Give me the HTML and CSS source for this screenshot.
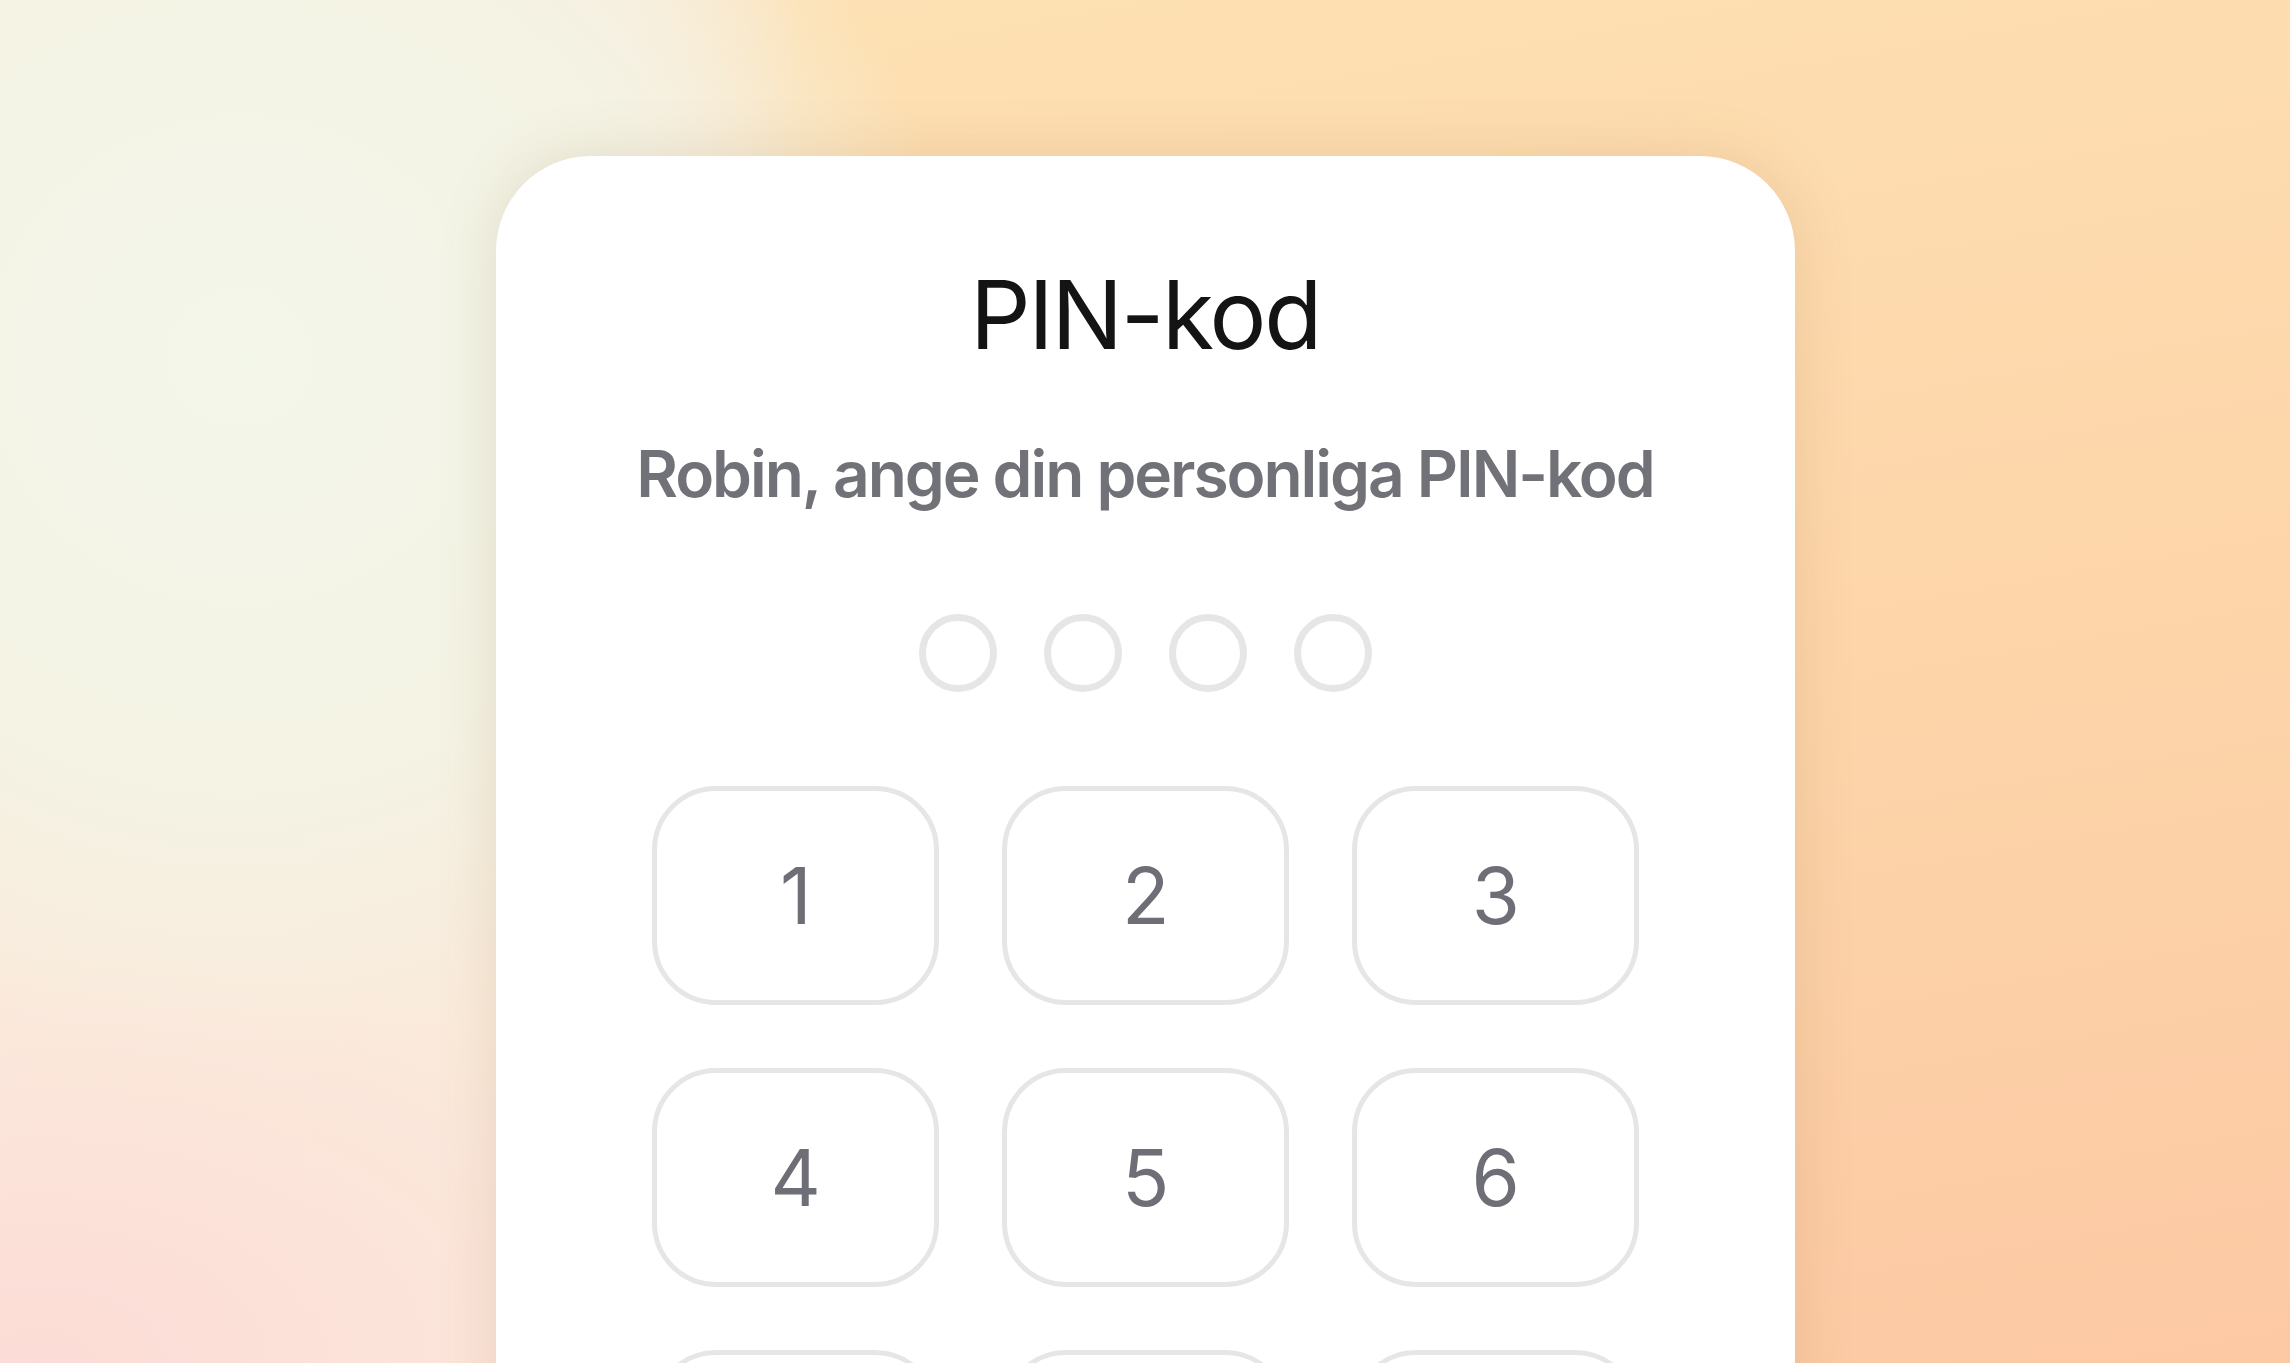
FILE: index.html
```html
<!DOCTYPE html>
<html lang="sv">
<head>
    <meta charset="UTF-8">
    <meta name="viewport" content="width=device-width, initial-scale=1.0">
    <title>PIN-kod</title>
    <link rel="stylesheet" href="styles.css">
</head>
<body>

    <main class="card">
        <h1>PIN-kod</h1>
        <p class="subtitle">Robin, ange din personliga PIN-kod</p>

        <!-- PIN dots -->
        <div class="dots">
            <span class="dot"></span>
            <span class="dot"></span>
            <span class="dot"></span>
            <span class="dot"></span>
        </div>

        <!-- Keypad -->
        <div class="keypad">
            <button class="key">1</button>
            <button class="key">2</button>
            <button class="key">3</button>
            <button class="key">4</button>
            <button class="key">5</button>
            <button class="key">6</button>
            <button class="key"></button>
            <button class="key"></button>
            <button class="key"></button>
        </div>
    </main>

</body>
</html>
```

FILE: styles.css
```css
html, body {
    margin: 0;
    height: 100%;
    overflow: hidden;
}

body {
    font-family: 'Inter', 'Noto Sans', sans-serif;
    background:
        radial-gradient(ellipse 720px 700px at 240px 360px, #f3f6ea 0%, #f4f3e4 60%, rgba(245, 240, 225, 0) 100%),
        radial-gradient(ellipse 700px 420px at 40px 1363px, #fcdcd6 0%, rgba(252, 224, 216, 0.8) 45%, rgba(252, 228, 216, 0) 100%),
        linear-gradient(to right, #faebdc 0%, #fbeadb 27%, rgba(250, 234, 219, 0) 35%),
        linear-gradient(170deg, #fde3b5 0%, #fdd5a9 55%, #fcc9a4 100%);
}

.card {
    width: 1299px;
    box-sizing: border-box;
    margin: 156px auto 0;
    padding: 111px 60px 200px;
    background-color: #ffffff;
    border-radius: 95px 95px 0 0;
    box-shadow: 0 0 60px rgba(140, 100, 50, 0.16);
    text-align: center;
}

h1 {
    margin: 0;
    font-size: 95px;
    line-height: 1;
    font-weight: 400;
    letter-spacing: -0.025em;
    color: #141414;
}

.subtitle {
    margin: 80px 0 0;
    font-size: 64px;
    line-height: 1;
    font-weight: 600;
    letter-spacing: -0.032em;
    white-space: nowrap;
    color: #717178;
}

.dots {
    display: flex;
    justify-content: center;
    gap: 47px;
    margin-top: 108px;
}

.dot {
    width: 78px;
    height: 78px;
    box-sizing: border-box;
    border: 7px solid #e6e6e6;
    border-radius: 50%;
}

.keypad {
    display: grid;
    grid-template-columns: repeat(3, 287px);
    grid-auto-rows: 219px;
    justify-content: center;
    gap: 63px;
    margin-top: 94px;
}

.key {
    font-family: inherit;
    font-size: 78px;
    font-weight: 400;
    letter-spacing: -0.02em;
    color: #6e6e76;
    background-color: #ffffff;
    border: 5px solid #e6e6e6;
    border-radius: 64px;
    padding: 0;
}
```
